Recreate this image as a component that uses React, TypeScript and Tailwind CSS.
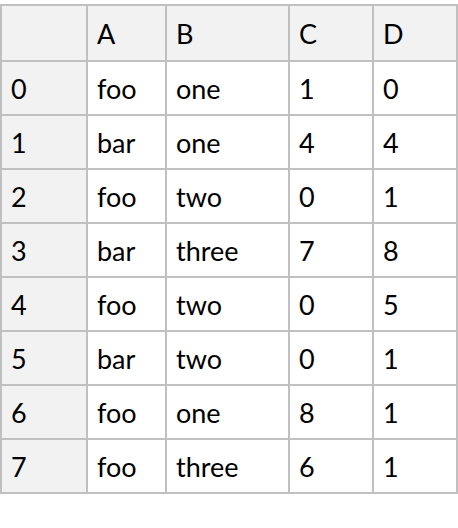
const columns = ["", "A", "B", "C", "D"];

const rows: [string, string, number, number][] = [
  ["foo", "one", 1, 0],
  ["bar", "one", 4, 4],
  ["foo", "two", 0, 1],
  ["bar", "three", 7, 8],
  ["foo", "two", 0, 5],
  ["bar", "two", 0, 1],
  ["foo", "one", 8, 1],
  ["foo", "three", 6, 1],
];

const cell = "flex items-center border-r-2 border-b-2 border-[#c0c0c0] pl-[9px]";

export default function App() {
  return (
    <div className="w-[458px] h-[528px] bg-white pt-[4px] text-black text-[27px] leading-none font-['Lato','Open_Sans',sans-serif]">
      <div className="grid grid-cols-[86px_79px_123px_84px_84px] border-l-2 border-t-2 border-[#c0c0c0] w-[458px]">
        {columns.map((c, i) => (
          <div key={i} className={`${cell} h-[56px] bg-[#f2f2f2]`}>
            {c}
          </div>
        ))}
        {rows.map((r, i) => (
          <div key={i} className="contents">
            <div className={`${cell} h-[54px] bg-[#f2f2f2]`}>{i}</div>
            {r.map((v, j) => (
              <div key={j} className={`${cell} h-[54px]`}>
                {v}
              </div>
            ))}
          </div>
        ))}
      </div>
    </div>
  );
}
